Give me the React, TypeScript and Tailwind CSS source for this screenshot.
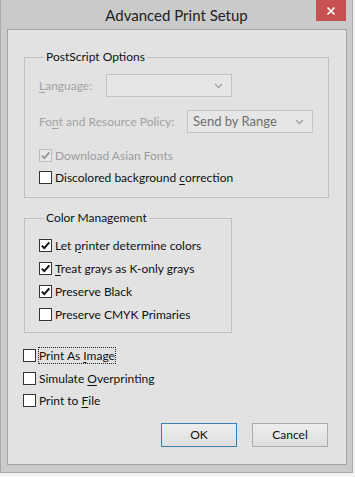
import React from "react";

const font = { fontFamily: 'Lato, "Noto Sans", sans-serif' };

function Box({ checked = false, disabled = false }: { checked?: boolean; disabled?: boolean }) {
  return (
    <span
      className={
        "flex h-[13px] w-[13px] shrink-0 items-center justify-center border " +
        (disabled ? "border-[#bcbcbc] bg-[#e8e8e8]" : "border-[#333333] bg-white")
      }
    >
      {checked && (
        <svg width="11" height="11" viewBox="0 0 11 11">
          <path
            d="M1.8 5.6 L4.3 8.1 L9.3 2.4"
            fill="none"
            stroke={disabled ? "#9a9a9a" : "#111111"}
            strokeWidth="2"
          />
        </svg>
      )}
    </span>
  );
}

function Row({
  children,
  checked,
  disabled,
  focus,
}: {
  children: React.ReactNode;
  checked?: boolean;
  disabled?: boolean;
  focus?: boolean;
}) {
  return (
    <div className="flex h-[16px] items-center gap-[2px]">
      <Box checked={checked} disabled={disabled} />
      <span
        className={
          "whitespace-nowrap leading-[15px] " +
          (disabled ? "text-[#9d9d9d] " : "text-[#111111] ") +
          (focus ? "border border-dotted border-[#222222]" : "border border-transparent")
        }
      >
        {children}
      </span>
    </div>
  );
}

function Combo({ text, width }: { text?: string; width: string }) {
  return (
    <div
      className={
        "flex h-[23px] items-center justify-between border border-[#c4c4c4] bg-[#e6e6e6] pl-[5px] pr-[8px] " +
        width
      }
    >
      <span className="text-[13px] text-[#6e6e6e]">{text ?? ""}</span>
      <svg width="9" height="6" viewBox="0 0 9 6">
        <path d="M1 1 L4.5 4.5 L8 1" fill="none" stroke="#a0a0a0" strokeWidth="1.3" />
      </svg>
    </div>
  );
}

const U = ({ children }: { children: React.ReactNode }) => <span className="underline underline-offset-[2px]">{children}</span>;

export default function App() {
  return (
    <div className="h-[477px] w-[355px] overflow-hidden bg-[#f3f3f3] text-[12px]" style={font}>
      <div className="flex h-[473px] w-[353px] flex-col border-l border-r border-b border-[#a9a9a9] bg-[#cacaca]">
        <div className="relative flex h-[29px] shrink-0 items-center justify-center pt-[1px]">
          <span className="text-[15px] text-[#222222]">Advanced Print Setup</span>
          <div className="absolute right-[6px] top-0 flex h-[21px] w-[30px] items-center justify-center bg-[#c75050]">
            <svg width="10" height="10" viewBox="0 0 10 10">
              <path d="M1.5 1.5 L8.5 8.5 M8.5 1.5 L1.5 8.5" stroke="white" strokeWidth="1.6" />
            </svg>
          </div>
        </div>
        <div className="ml-[6px] flex h-[436px] w-[340px] flex-col border border-[#a3a3a3] bg-[#e2e2e2] pl-[16px] pr-[18px]">
          <fieldset className="mt-[19px] w-[305px] border border-[#c0c0c0] pb-[12px] pl-[14px] pt-[9px]">
            <legend className="ml-[5px] px-[2px] leading-[16px] text-[#111111]">PostScript Options</legend>
            <div className="flex h-[23px] items-center">
              <span className="w-[67px] text-[#a3a3a3]">
                <U>L</U>anguage:
              </span>
              <Combo width="w-[126px]" />
            </div>
            <div className="mt-[13px] flex h-[23px] items-center">
              <span className="w-[148px] text-[#a3a3a3]">
                Fo<U>n</U>t and Resource Policy:
              </span>
              <Combo text="Send by Range" width="w-[126px]" />
            </div>
            <div className="mt-[14px]">
              <Row checked disabled>
                Download Asian Fonts
              </Row>
            </div>
            <div className="mt-[6px]">
              <Row>
                Discolored background <U>c</U>orrection
              </Row>
            </div>
          </fieldset>
          <fieldset className="mt-[12px] flex w-[208px] flex-col gap-[7px] border border-[#c0c0c0] pb-[10px] pl-[14px] pt-[11px]">
            <legend className="ml-[5px] px-[2px] leading-[16px] text-[#111111]">Color Management</legend>
            <Row checked>
              Let <U>p</U>rinter determine colors
            </Row>
            <Row checked>
              <U>T</U>reat grays as K-only grays
            </Row>
            <Row checked>Preserve Black</Row>
            <Row>Preserve CMYK Primaries</Row>
          </fieldset>
          <div className="ml-[-1px] mt-[14px] flex flex-col">
            <Row focus>
              Print As <U>I</U>mage
            </Row>
            <div className="mt-[7px]">
              <Row>
                Simulate <U>O</U>verprinting
              </Row>
            </div>
            <div className="mt-[6px]">
              <Row>
                Print to <U>F</U>ile
              </Row>
            </div>
          </div>
          <div className="mt-[15px] flex justify-end gap-[15px]">
            <button className="h-[24px] w-[76px] border border-[#3c7fb1] bg-gradient-to-b from-[#eeeeee] to-[#dedede] text-[12px] text-[#111111]">
              OK
            </button>
            <button className="h-[24px] w-[76px] border border-[#acacac] bg-gradient-to-b from-[#eeeeee] to-[#dedede] text-[12px] text-[#111111]">
              Cancel
            </button>
          </div>
        </div>
      </div>
    </div>
  );
}
